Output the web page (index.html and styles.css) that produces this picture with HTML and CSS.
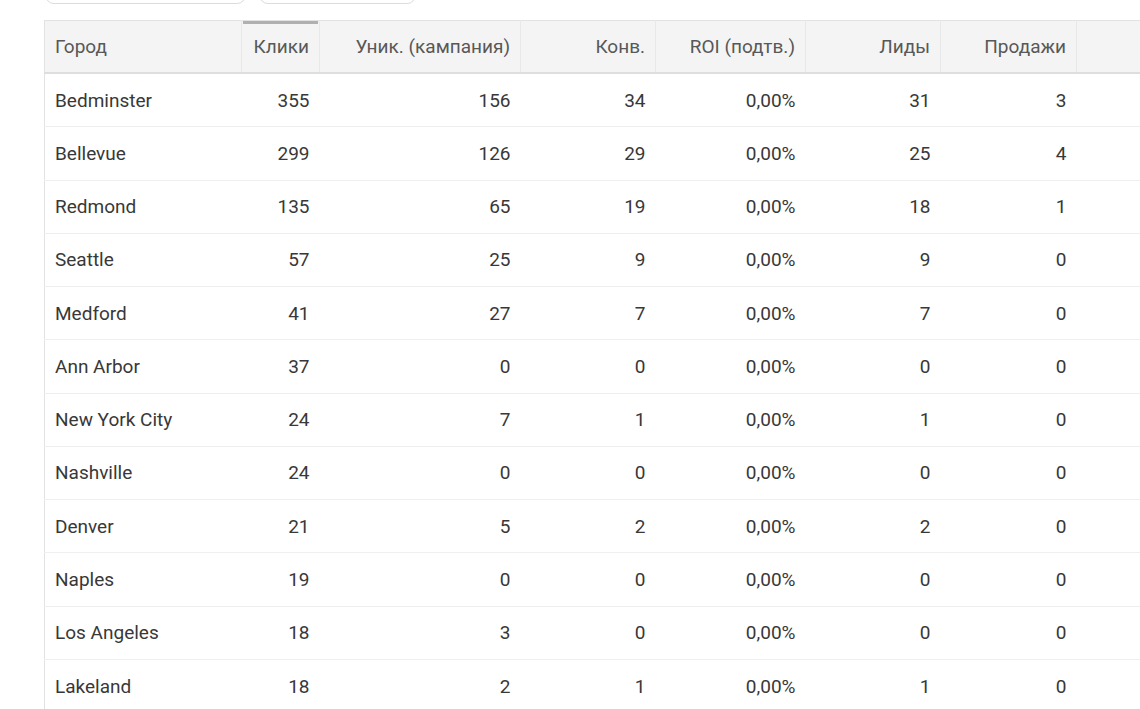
FILE: index.html
```html
<!DOCTYPE html>
<html lang="ru">
<head>
<meta charset="utf-8">
<link rel="stylesheet" href="styles.css">
</head>
<body>
<div class="page">
  <div class="toolbar">
    <div class="btn btn-a"></div>
    <div class="btn btn-b"></div>
  </div>
  <table class="grid">
    <colgroup>
      <col class="c-city"><col class="c-clicks"><col class="c-uniq"><col class="c-conv"><col class="c-roi"><col class="c-leads"><col class="c-sales"><col class="c-rest">
    </colgroup>
    <thead>
      <tr>
        <th class="left">Город</th>
        <th class="sorted">Клики</th>
        <th>Уник. (кампания)</th>
        <th>Конв.</th>
        <th>ROI (подтв.)</th>
        <th>Лиды</th>
        <th>Продажи</th>
        <th class="rest"></th>
      </tr>
    </thead>
    <tbody>
      <tr><td class="left">Bedminster</td><td>355</td><td>156</td><td>34</td><td>0,00%</td><td>31</td><td>3</td><td class="rest"></td></tr>
      <tr><td class="left">Bellevue</td><td>299</td><td>126</td><td>29</td><td>0,00%</td><td>25</td><td>4</td><td class="rest"></td></tr>
      <tr><td class="left">Redmond</td><td>135</td><td>65</td><td>19</td><td>0,00%</td><td>18</td><td>1</td><td class="rest"></td></tr>
      <tr><td class="left">Seattle</td><td>57</td><td>25</td><td>9</td><td>0,00%</td><td>9</td><td>0</td><td class="rest"></td></tr>
      <tr><td class="left">Medford</td><td>41</td><td>27</td><td>7</td><td>0,00%</td><td>7</td><td>0</td><td class="rest"></td></tr>
      <tr><td class="left">Ann Arbor</td><td>37</td><td>0</td><td>0</td><td>0,00%</td><td>0</td><td>0</td><td class="rest"></td></tr>
      <tr><td class="left">New York City</td><td>24</td><td>7</td><td>1</td><td>0,00%</td><td>1</td><td>0</td><td class="rest"></td></tr>
      <tr><td class="left">Nashville</td><td>24</td><td>0</td><td>0</td><td>0,00%</td><td>0</td><td>0</td><td class="rest"></td></tr>
      <tr><td class="left">Denver</td><td>21</td><td>5</td><td>2</td><td>0,00%</td><td>2</td><td>0</td><td class="rest"></td></tr>
      <tr><td class="left">Naples</td><td>19</td><td>0</td><td>0</td><td>0,00%</td><td>0</td><td>0</td><td class="rest"></td></tr>
      <tr><td class="left">Los Angeles</td><td>18</td><td>3</td><td>0</td><td>0,00%</td><td>0</td><td>0</td><td class="rest"></td></tr>
      <tr><td class="left">Lakeland</td><td>18</td><td>2</td><td>1</td><td>0,00%</td><td>1</td><td>0</td><td class="rest"></td></tr>
    </tbody>
  </table>
</div>
</body>
</html>
```
FILE: styles.css
```css
html, body {
  margin: 0;
  padding: 0;
  overflow: hidden;
  background: #fff;
}
body {
  font-family: Roboto, "Liberation Sans", sans-serif;
  color: #383838;
}
.page {
  padding-left: 44px;
  width: 1160px;
}
.toolbar {
  display: flex;
  gap: 13px;
  height: 24px;
  margin-top: -20px;
  margin-bottom: 16px;
}
.btn {
  height: 22px;
  border: 1px solid #dcdcdc;
  border-radius: 9px;
  background: #fff;
}
.btn-a { width: 199px; margin-left: 1px; }
.btn-b { width: 155px; }
.grid {
  border-collapse: collapse;
  table-layout: fixed;
  width: 1130px;
  font-size: 19px;
}
.c-city { width: 197px; }
.c-clicks { width: 78px; }
.c-uniq { width: 201px; }
.c-conv { width: 135px; }
.c-roi { width: 150px; }
.c-leads { width: 135px; }
.c-sales { width: 136px; }
.c-rest { width: 98px; }
.grid th {
  background: #f4f4f4;
  color: #585858;
  font-weight: 400;
  height: 51px;
  padding: 0 10px;
  text-align: right;
  border-top: 1px solid #e2e2e2;
  border-right: 1px solid #e8e8e8;
  border-bottom: 2px solid #dedede;
  white-space: nowrap;
  position: relative;
}
.grid th:first-child {
  border-left: 1px solid #e2e2e2;
}
.grid th.rest { border-right: none; }
.grid th.sorted::before {
  content: "";
  position: absolute;
  left: 1px;
  right: 1px;
  top: 0;
  height: 3px;
  background: #b0b0b0;
}
.grid td {
  height: 52.27px;
  padding: 0 10px;
  text-align: right;
  border-bottom: 1px solid #efefef;
  white-space: nowrap;
}
.grid td:first-child {
  border-left: 1px solid #e2e2e2;
}
.grid .left { text-align: left; }
```
